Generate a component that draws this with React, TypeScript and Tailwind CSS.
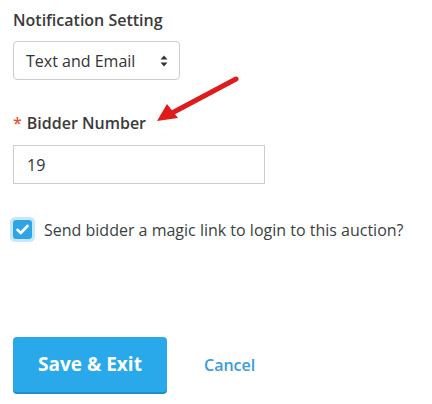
import React from "react";

export default function App() {
  return (
    <div className="relative w-[432px] h-[404px] bg-white" style={{ fontFamily: '"Open Sans", sans-serif' }}>
      <div className="pl-[13px] pt-[9px] flex flex-col items-start">
        <div className="text-[16px] leading-[22px] font-semibold text-[#3a3a3a]">Notification Setting</div>
        <div className="mt-[10px] h-[39px] w-[167px] border border-[#ccc] rounded-[4px] flex items-center justify-between pl-[12px] pr-[11px]">
          <span className="text-[16px] text-[#333]">Text and Email</span>
          <svg width="8" height="12" viewBox="0 0 8 12">
            <path d="M4 0.5 L7.5 4.5 H0.5 Z" fill="#333" />
            <path d="M4 11.5 L7.5 7.5 H0.5 Z" fill="#333" />
          </svg>
        </div>
        <div className="mt-[32px] text-[16px] leading-[22px] font-semibold text-[#3a3a3a] flex items-center">
          <span className="text-[#e8552f] mr-[5px]">*</span>
          <span>Bidder Number</span>
        </div>
        <div className="mt-[11px] h-[39px] w-[252px] border border-[#ccc] flex items-center pl-[13px]">
          <span className="text-[16px] text-[#333]">19</span>
        </div>
        <div className="mt-[32px] flex items-center h-[27px]">
          <div className="ml-[-3px] p-[3px] rounded-[5px] bg-[#c7e8fa]">
            <div className="w-[19px] h-[19px] rounded-[3px] bg-[#2ea6e6] flex items-center justify-center">
              <svg width="13" height="11" viewBox="0 0 13 11">
                <path d="M1.5 5.8 L4.8 9 L11.5 2" stroke="#fff" strokeWidth="2.6" fill="none" strokeLinecap="round" strokeLinejoin="round" />
              </svg>
            </div>
          </div>
          <span className="ml-[9px] text-[16px] text-[#3a3f44]">Send bidder a magic link to login to this auction?</span>
        </div>
        <div className="mt-[94px] flex items-center">
          <button className="h-[55px] w-[154px] rounded-[4px] bg-[#29a9ea] text-white text-[19px] font-bold shadow-[0_2px_0_#1f8fc9]">
            Save &amp; Exit
          </button>
          <span className="ml-[37px] text-[16px] font-semibold text-[#3a9bdb]">Cancel</span>
        </div>
      </div>
      <svg className="absolute left-0 top-0 pointer-events-none" width="432" height="404">
        <line x1="236" y1="79" x2="172" y2="113" stroke="#e01b1b" strokeWidth="5" strokeLinecap="round" />
        <path d="M157 121 L167 104 L178 118 Z" fill="#e01b1b" />
      </svg>
    </div>
  );
}
